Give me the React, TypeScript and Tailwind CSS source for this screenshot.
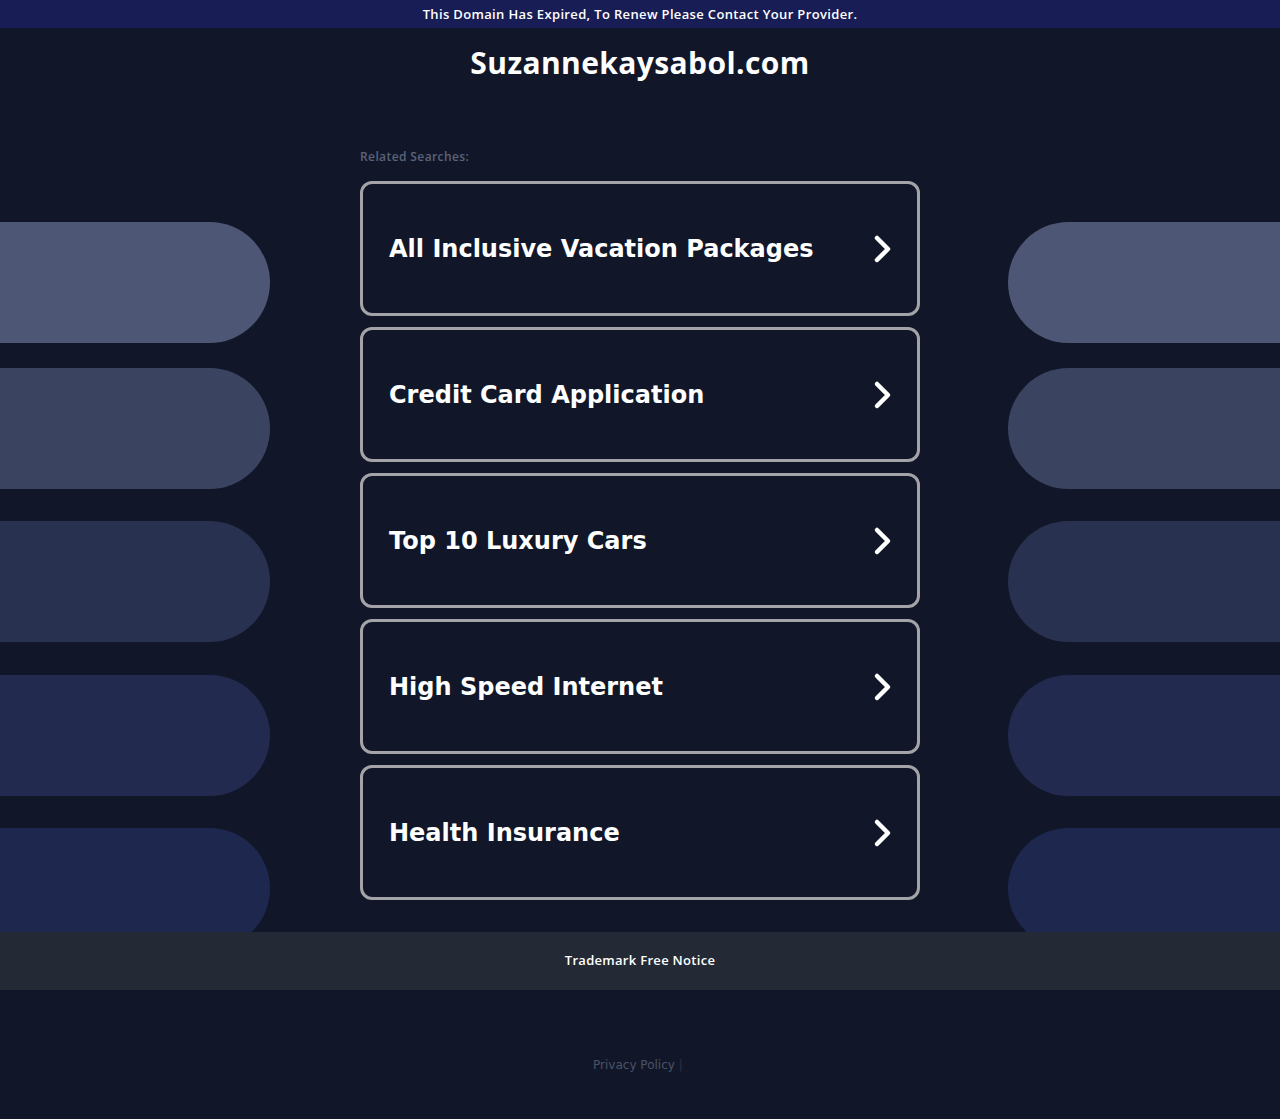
import React from 'react'

const searches = [
  "All Inclusive Vacation Packages",
  "Credit Card Application",
  "Top 10 Luxury Cars",
  "High Speed Internet",
  "Health Insurance",
]

// side decoration, top offset + colour per pill
const pills = [
  { mt: "mt-[122px]", bg: "bg-[#4d5775]" },
  { mt: "mt-[25px]", bg: "bg-[#3a4460]" },
  { mt: "mt-[32px]", bg: "bg-[#28314f]" },
  { mt: "mt-[33px]", bg: "bg-[#222b4f]" },
  { mt: "mt-[32px]", bg: "bg-[#1e284f]" },
]

const Chevron = () => (
  <svg width="22" height="30" viewBox="0 0 22 30" fill="none">
    <path d="M6 4 L17 15 L6 26" stroke="white" strokeWidth="4.5" strokeLinecap="round" strokeLinejoin="round" />
  </svg>
)

const PillColumn = ({ side }: { side: "left" | "right" }) => (
  <div className={`flex flex-col ${side == "left" ? "w-[270px]" : "w-[272px]"}`}>
    {pills.map((p, i) => (
      <div
        key={i}
        className={`h-[121px] shrink-0 ${p.mt} ${p.bg} ${side == "left" ? "rounded-r-[61px]" : "rounded-l-[61px]"}`}
      />
    ))}
  </div>
)

export default function App() {
  return (
    <div className="min-h-[1119px] bg-[#111729] font-['Open_Sans',sans-serif]">
      {/* expired banner */}
      <div className="h-[28px] pt-[1px] bg-[#181d55] flex items-center justify-center">
        <p className="text-[13px] font-semibold text-white tracking-[0.35px]">
          This Domain Has Expired, To Renew Please Contact Your Provider.
        </p>
      </div>

      <div className="h-[72px] flex justify-center pt-[19px]">
        <h1 className="text-white font-bold text-[30px] leading-[32px] tracking-[0.4px]">
          Suzannekaysabol.com
        </h1>
      </div>

      {/* main */}
      <div className="flex h-[832px] overflow-hidden">
        <PillColumn side="left" />
        <div className="w-[90px]" />
        <div className="w-[560px] flex flex-col">
          <p className="mt-[49px] text-[12px] leading-[16px] text-[#5c6379] font-semibold tracking-[0.4px]">Related Searches:</p>
          <div className="mt-[16px] flex flex-col gap-[11px]">
            {searches.map((s) => (
              <div
                key={s}
                className="h-[135px] border-[3px] border-[#a3a3a8] rounded-[12px] flex items-center justify-between pl-[26px] pr-[24px]"
              >
                <span className="font-['DejaVu_Sans',sans-serif] font-bold text-[24px] text-white">{s}</span>
                <Chevron />
              </div>
            ))}
          </div>
        </div>
        <div className="w-[88px]" />
        <PillColumn side="right" />
      </div>

      {/* footer */}
      <div className="h-[58px] bg-[#232a35] flex items-center justify-center">
        <span className="text-[13px] font-semibold text-white tracking-[0.3px]">Trademark Free Notice</span>
      </div>
      <div className="pt-[66px] pr-[4px] flex justify-center items-center gap-[4px] font-['DejaVu_Sans',sans-serif] text-[12px] text-[#4c5266]">
        <span>Privacy Policy</span>
        <span className="text-[#2c3244]">|</span>
      </div>
    </div>
  )
}
